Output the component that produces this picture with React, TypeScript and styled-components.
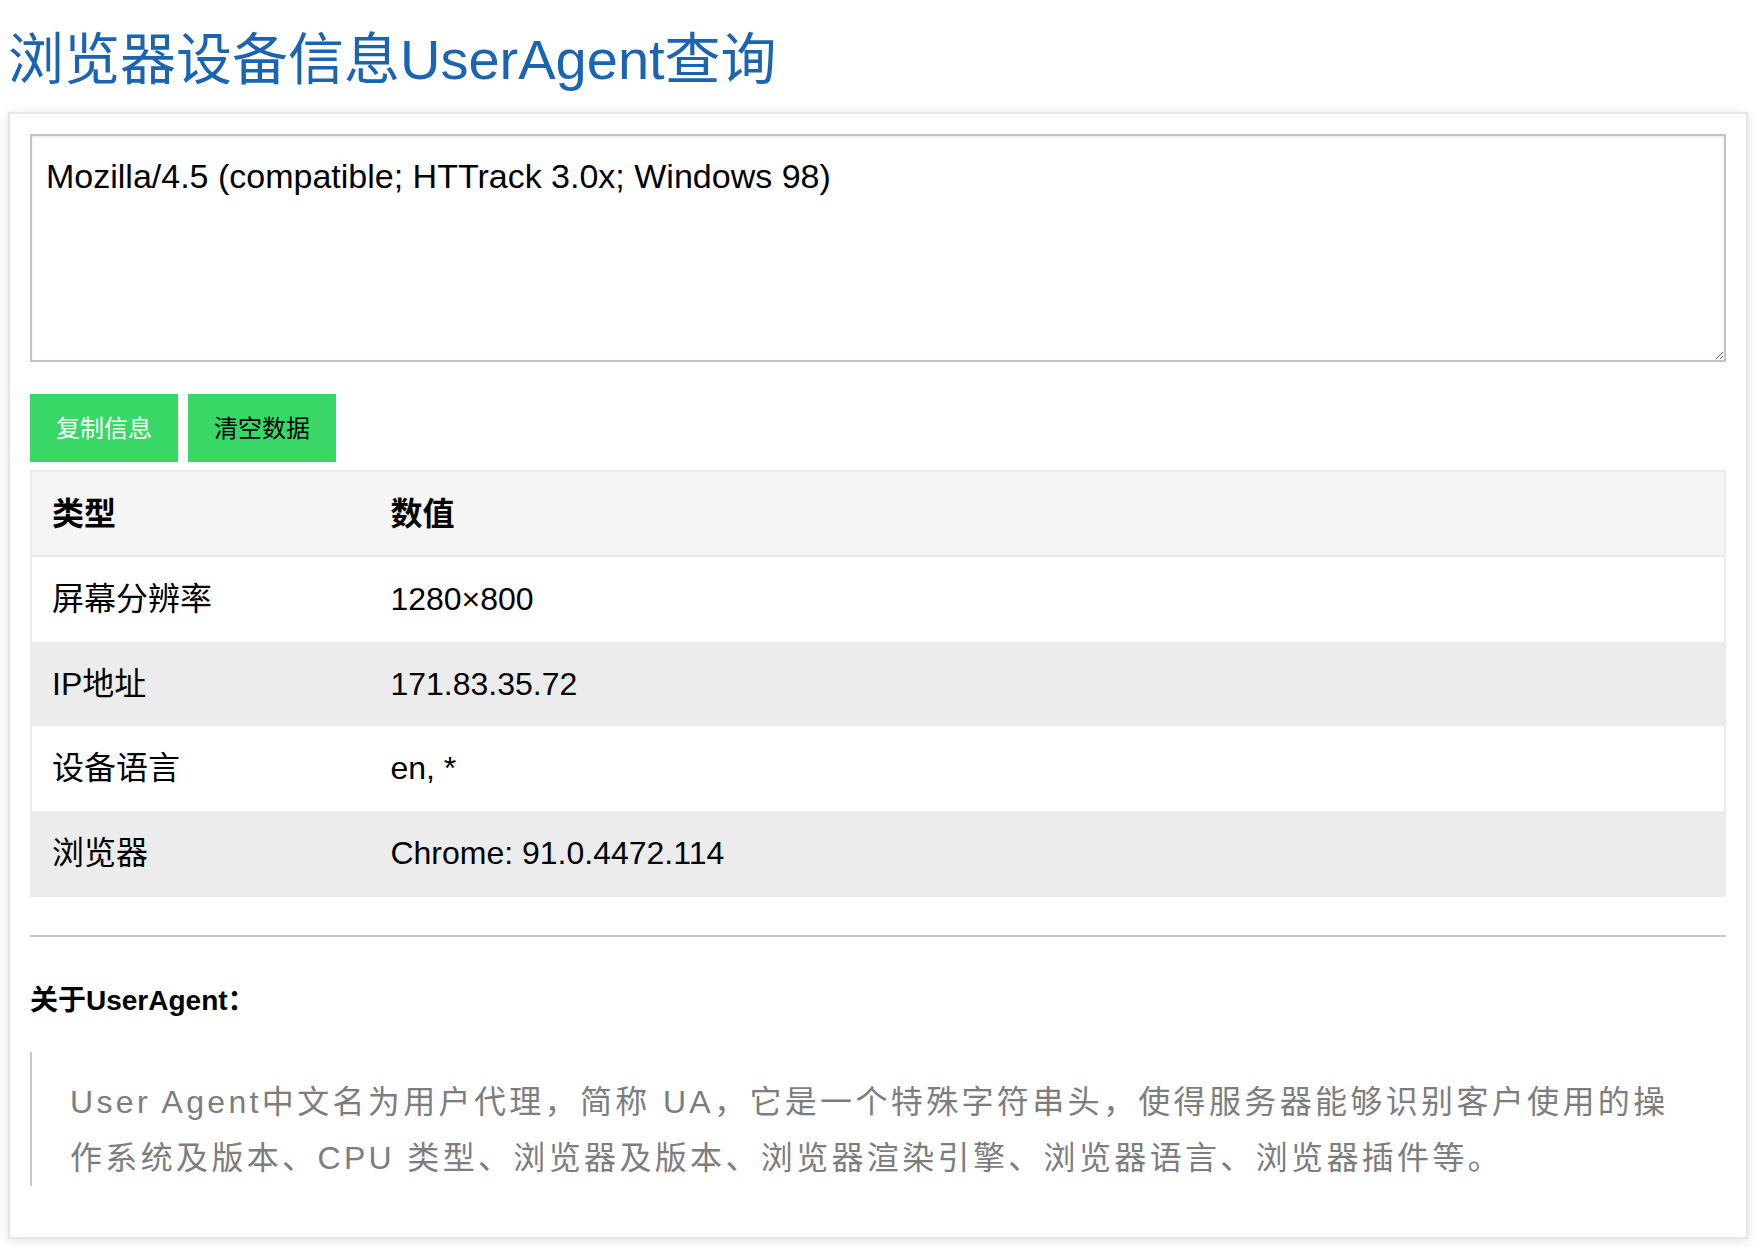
import React from "react";
import styled, { createGlobalStyle } from "styled-components";

const GlobalStyle = createGlobalStyle`
  html, body {
    margin: 0;
    padding: 0;
    background: #ffffff;
  }
  body {
    font-family: "Liberation Sans", "Noto Sans CJK SC", sans-serif;
    color: #000;
  }
  *, *::before, *::after {
    box-sizing: border-box;
  }
`;

const Page = styled.div`
  padding: 0 8px 8px;
`;

const Title = styled.h1`
  margin: 0 0 20px;
  padding-top: 28px;
  font-size: 56px;
  font-weight: normal;
  line-height: 64px;
  color: #1a64b0;
`;

const Card = styled.section`
  display: flex;
  flex-direction: column;
  background: #fff;
  border: 2px solid #e6e6e6;
  box-shadow: 0 2px 10px rgba(0, 0, 0, 0.12);
  padding: 20px 20px 20px;
`;

const UAInput = styled.textarea`
  display: block;
  width: 100%;
  height: 228px;
  margin: 0;
  border: 2px solid #c4c4c4;
  box-shadow: inset 0 1px 3px rgba(0, 0, 0, 0.1);
  padding: 20px 14px;
  font-family: "Liberation Sans", "Noto Sans CJK SC", sans-serif;
  font-size: 34px;
  line-height: 40px;
  color: #000;
  background: #fff;
  outline: none;
`;

const ButtonRow = styled.div`
  display: flex;
  gap: 10px;
  margin-top: 32px;
`;

const ActionButton = styled.button<{ $dark?: boolean }>`
  height: 68px;
  width: 148px;
  padding: 0 0 4px;
  border: none;
  background: #39d866;
  color: ${(p) => (p.$dark ? "#000" : "#fff")};
  font-family: "Liberation Sans", "Noto Sans CJK SC", sans-serif;
  font-size: 24px;
  cursor: pointer;
`;

const InfoTable = styled.table`
  width: 100%;
  margin-top: 8px;
  border-collapse: separate;
  border-spacing: 0;
  border: 2px solid #ebebeb;
  font-size: 32px;
  line-height: 40px;
`;

const HeadCell = styled.th<{ $w?: string }>`
  width: ${(p) => p.$w ?? "auto"};
  height: 85px;
  padding: 0 20px;
  text-align: left;
  vertical-align: middle;
  font-weight: bold;
  background: #f5f5f5;
  border-bottom: 2px solid #e8e8e8;
`;

const Row = styled.tr<{ $alt: boolean }>`
  background: ${(p) => (p.$alt ? "#ececec" : "#ffffff")};
`;

const Cell = styled.td`
  height: 84.5px;
  padding: 0 20px;
  vertical-align: middle;
  font-weight: normal;
`;

const Divider = styled.hr`
  margin: 38px 0 0;
  border: none;
  border-top: 2px solid #c8c8c8;
  height: 0;
`;

const AboutTitle = styled.h4`
  margin: 44px 0 0;
  font-size: 28px;
  line-height: 40px;
  font-weight: bold;
  color: #000;
`;

const Quote = styled.blockquote`
  margin: 31px 0 31px;
  padding: 22px 38px 0 38px;
  border-left: 2px solid #c8c8c8;
  font-size: 32px;
  line-height: 56px;
  letter-spacing: 3.35px;
  color: #7d7d7d;
`;

const rows: [string, string][] = [
  ["屏幕分辨率", "1280×800"],
  ["IP地址", "171.83.35.72"],
  ["设备语言", "en, *"],
  ["浏览器", "Chrome: 91.0.4472.114"],
];

export default function App() {
  return (
    <Page>
      <GlobalStyle />
      <Title>浏览器设备信息UserAgent查询</Title>
      <Card>
        <UAInput
          defaultValue="Mozilla/4.5 (compatible; HTTrack 3.0x; Windows 98)"
          spellCheck={false}
        />
        <ButtonRow>
          <ActionButton>复制信息</ActionButton>
          <ActionButton $dark>清空数据</ActionButton>
        </ButtonRow>
        <InfoTable>
          <thead>
            <tr>
              <HeadCell $w="20%">类型</HeadCell>
              <HeadCell>数值</HeadCell>
            </tr>
          </thead>
          <tbody>
            {rows.map(([k, v], i) => (
              <Row key={k} $alt={i % 2 === 1}>
                <Cell>{k}</Cell>
                <Cell>{v}</Cell>
              </Row>
            ))}
          </tbody>
        </InfoTable>
        <Divider />
        <AboutTitle>关于UserAgent：</AboutTitle>
        <Quote>
          User Agent中文名为用户代理，简称 UA，它是一个特殊字符串头，使得服务器能够识别客户使用的操作系统及版本、CPU 类型、浏览器及版本、浏览器渲染引擎、浏览器语言、浏览器插件等。
        </Quote>
      </Card>
    </Page>
  );
}
